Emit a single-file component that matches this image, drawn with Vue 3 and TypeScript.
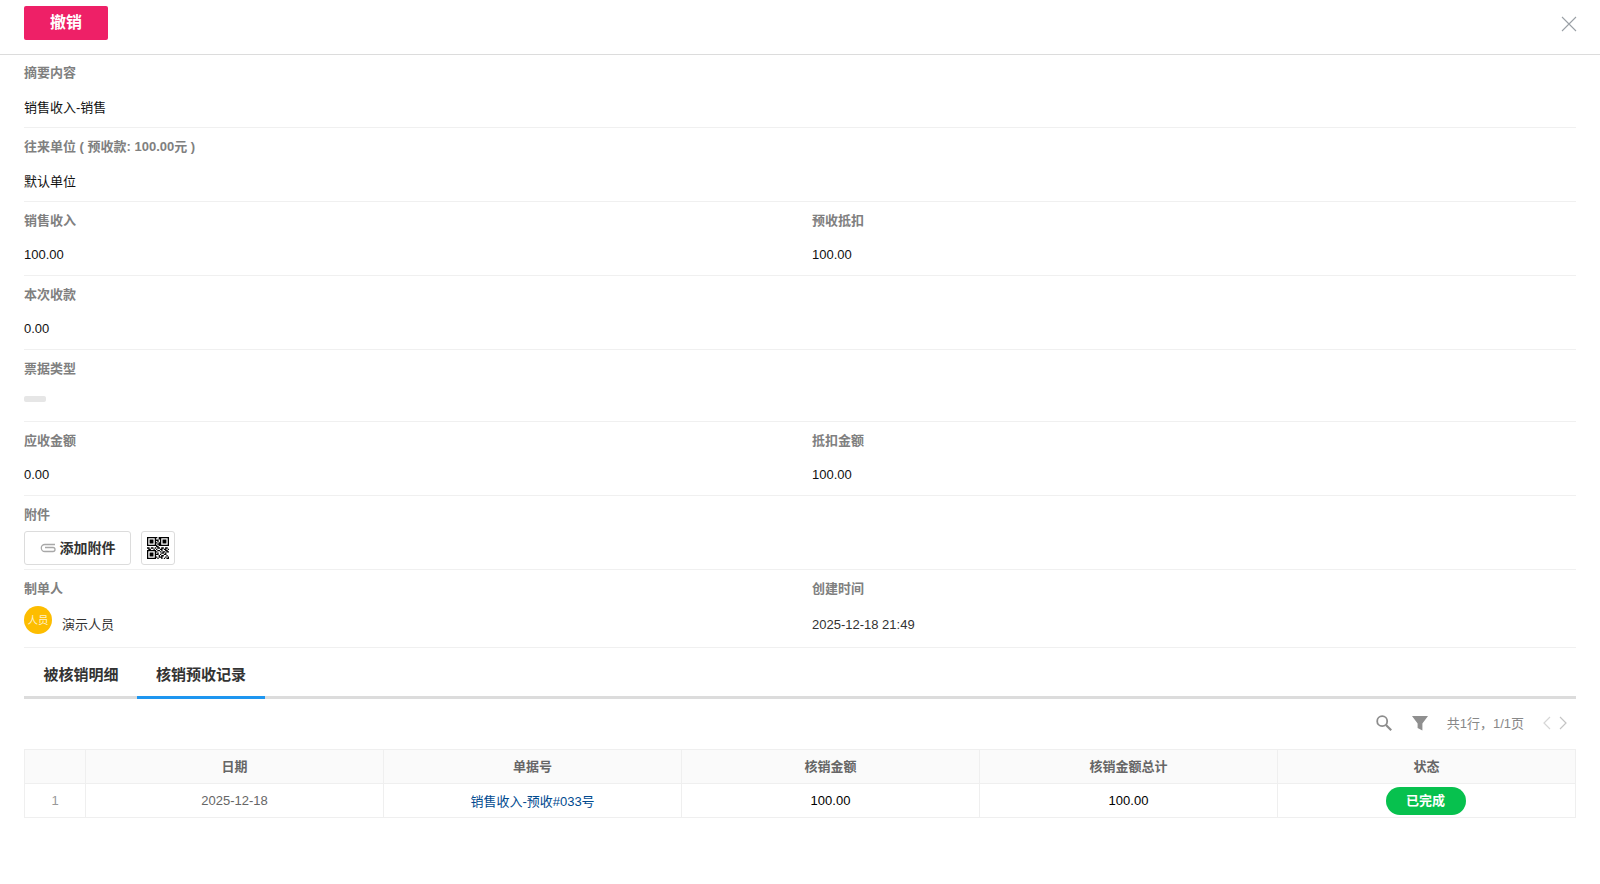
<script setup lang="ts">
interface Field { label: string; value: string }
const rowsTop: Field[][] = [
  [{ label: '摘要内容', value: '销售收入-销售' }],
  [{ label: '往来单位 ( 预收款: 100.00元 )', value: '默认单位' }],
  [{ label: '销售收入', value: '100.00' }, { label: '预收抵扣', value: '100.00' }],
  [{ label: '本次收款', value: '0.00' }],
]
const rowsMid: Field[][] = [
  [{ label: '应收金额', value: '0.00' }, { label: '抵扣金额', value: '100.00' }],
]
const heads = ['', '日期', '单据号', '核销金额', '核销金额总计', '状态']
const qrRows = [
  '11111111011111111',
  '10000010011000001',
  '10111011101011101',
  '10111010101011101',
  '10111011011011101',
  '10000010111000001',
  '11111111011111111',
  '00000001100000000',
  '11011010110110110',
  '01100101001101101',
  '11111110110100110',
  '10000011001011011',
  '10111010100110100',
  '10111011101001100',
  '10111010010110010',
  '10000011011100101',
  '11111110100101011',
]
const qrPath = qrRows
  .map((r, y) =>
    r
      .split('')
      .map((c, x) => (c === '1' ? `M${x} ${y}h1v1h-1z` : ''))
      .join(''),
  )
  .join('')
</script>

<template>
  <div class="page">
    <header class="topbar">
      <button class="revoke">撤销</button>
      <svg class="close" width="16" height="16" viewBox="0 0 16 16">
        <path d="M1 1l14 14M15 1L1 15" stroke="#9aa0a6" stroke-width="1.1" fill="none" />
      </svg>
    </header>
    <main class="body">
      <section v-for="(row, i) in rowsTop" :key="'t' + i" class="row" :class="{ first: i === 0, second: i === 1 }">
        <div v-for="f in row" :key="f.label" class="field">
          <div class="label">{{ f.label }}</div>
          <div class="value">{{ f.value }}</div>
        </div>
      </section>

      <section class="row row-ticket">
        <div class="field">
          <div class="label">票据类型</div>
          <div class="placeholder"></div>
        </div>
      </section>

      <section v-for="(row, i) in rowsMid" :key="'m' + i" class="row">
        <div v-for="f in row" :key="f.label" class="field">
          <div class="label">{{ f.label }}</div>
          <div class="value">{{ f.value }}</div>
        </div>
      </section>

      <section class="row row-attach">
        <div class="field">
          <div class="label">附件</div>
          <div class="attach">
            <button class="add">
              <svg width="16" height="10" viewBox="0 0 16 10" fill="none">
                <path d="M15 1.5H4.8a3.5 3.5 0 0 0 0 7h8.2a2 2 0 0 0 0-4H5" stroke="#a8a8a8" stroke-width="1.3" />
              </svg>
              <span>添加附件</span>
            </button>
            <button class="qr">
              <svg width="22" height="22" viewBox="0 0 17 17">
                <path :d="qrPath" fill="#000" />
              </svg>
            </button>
          </div>
        </div>
      </section>

      <section class="row row-maker">
        <div class="field">
          <div class="label">制单人</div>
          <div class="maker">
            <span class="avatar">人员</span>
            <span class="maker-name">演示人员</span>
          </div>
        </div>
        <div class="field">
          <div class="label">创建时间</div>
          <div class="value created">2025-12-18 21:49</div>
        </div>
      </section>

      <nav class="tabs">
        <span class="tab">被核销明细</span>
        <span class="tab active">核销预收记录</span>
      </nav>

      <div class="toolbar">
        <svg class="tool-icon" width="18" height="18" viewBox="0 0 18 18" fill="none">
          <circle cx="7.2" cy="7.2" r="5" stroke="#8c8c8c" stroke-width="1.8" />
          <path d="M11 11l5.2 5.2" stroke="#8c8c8c" stroke-width="2.2" />
        </svg>
        <svg class="tool-icon tool-filter" width="16" height="16" viewBox="0 0 16 16">
          <path d="M0 1h16L10.4 8.5V15.5L5.6 13V8.5z" fill="#8f8f8f" />
        </svg>
        <span class="pager-text">共1行，1/1页</span>
        <svg class="tool-icon chev" width="10" height="14" viewBox="0 0 10 14" fill="none">
          <path d="M8 1L2 7l6 6" stroke="#d6d6d6" stroke-width="1.2" />
        </svg>
        <svg class="tool-icon chev chev-next" width="10" height="14" viewBox="0 0 10 14" fill="none">
          <path d="M2 1l6 6-6 6" stroke="#c4c4c4" stroke-width="1.2" />
        </svg>
      </div>

      <div class="table">
        <div v-for="h in heads" :key="h" class="th">{{ h }}</div>
        <div class="td idx">1</div>
        <div class="td date">2025-12-18</div>
        <div class="td link">销售收入-预收#033号</div>
        <div class="td num">100.00</div>
        <div class="td num">100.00</div>
        <div class="td"><span class="status">已完成</span></div>
      </div>
    </main>
  </div>
</template>

<style>
html, body { margin: 0; background: #fff; }
</style>

<style scoped>
.page {
  width: 1600px;
  height: 884px;
  overflow: hidden;
  background: #fff;
  font-family: "Liberation Sans", "Noto Sans CJK SC", sans-serif;
  font-size: 13px;
  color: #000;
}
.topbar {
  height: 55px;
  box-sizing: border-box;
  border-bottom: 1px solid #dcdcdc;
  padding: 6px 24px 0;
  display: flex;
  justify-content: space-between;
  align-items: flex-start;
}
.revoke {
  width: 84px;
  height: 34px;
  border: 0;
  border-radius: 2px;
  background: #ee2067;
  color: #fff;
  font: bold 16px "Liberation Sans", "Noto Sans CJK SC", sans-serif;
  padding: 0 0 5px;
}
.close { margin: 10px -1px 0 0; }
.body { padding: 0 24px; }
.row {
  display: grid;
  grid-template-columns: 788px 1fr;
  height: 74px;
  box-sizing: border-box;
  border-bottom: 1px solid #f0f0f0;
}
.row.first { height: 73px; }
.label {
  padding-top: 9px;
  line-height: 20px;
  font-weight: bold;
  color: #808080;
}
.value {
  margin-top: 14px;
  line-height: 20px;
  color: #111;
}
.row.first .label { padding-top: 8px; }
.row.first .value { margin-top: 15px; }
.row.second .value { margin-top: 15px; }
.row-ticket { height: 72px; }
.placeholder {
  width: 22px;
  height: 6px;
  margin-top: 17px;
  border-radius: 2px;
  background: #e6e6e6;
}
.attach { display: flex; gap: 10px; margin-top: 6px; }
.add {
  width: 107px;
  height: 34px;
  box-sizing: border-box;
  border: 1px solid #dcdcdc;
  border-radius: 3px;
  background: #fff;
  display: flex;
  align-items: center;
  justify-content: center;
  gap: 4px;
  padding: 0 0 2px;
  color: #333;
  font: bold 14px "Liberation Sans", "Noto Sans CJK SC", sans-serif;
}
.add svg { margin-top: 2px; }
.qr {
  width: 34px;
  height: 34px;
  box-sizing: border-box;
  border: 1px solid #dcdcdc;
  border-radius: 3px;
  background: #fff;
  padding: 0;
  display: flex;
  align-items: center;
  justify-content: center;
}
.row-maker { height: 78px; }
.maker { display: flex; }
.avatar {
  width: 28px;
  height: 28px;
  border-radius: 50%;
  background: #fdbd00;
  color: #fff1c9;
  font-size: 10.5px;
  line-height: 28px;
  text-align: center;
  margin-top: 7px;
}
.maker-name { margin: 16px 0 0 10px; line-height: 20px; color: #333; }
.row .created { margin-top: 16px; color: #333; }
.tabs {
  height: 51px;
  box-sizing: border-box;
  border-bottom: 3px solid #dcdcdc;
  display: flex;
}
.tab {
  width: 114px;
  height: 51px;
  box-sizing: border-box;
  padding-top: 16px;
  line-height: 22px;
  text-align: center;
  font-size: 15px;
  font-weight: bold;
  color: #333;
}
.tab.active {
  width: 128px;
  margin-left: -1px;
  border-bottom: 3px solid #1e96f0;
}
.toolbar {
  height: 50px;
  box-sizing: border-box;
  padding-bottom: 4px;
  display: flex;
  align-items: center;
  justify-content: flex-end;
  color: #8a8a8a;
}
.tool-icon { margin-top: 2px; }
.tool-filter { margin-left: 19px; }
.pager-text { margin-left: 19px; color: #888; }
.chev { margin-left: 18px; }
.chev-next { margin: 2px 8px 0 6px; }
.table {
  display: grid;
  grid-template-columns: 61px repeat(4, 298px) 1fr;
  border-top: 1px solid #efefef;
  border-left: 1px solid #efefef;
}
.th, .td {
  height: 34px;
  box-sizing: border-box;
  border-right: 1px solid #efefef;
  border-bottom: 1px solid #efefef;
  display: flex;
  align-items: center;
  justify-content: center;
}
.th { background: #fafafa; font-weight: bold; color: #666; padding-bottom: 3px; }
.idx { color: #999; }
.date { color: #666; }
.link { color: #004a8f; padding-bottom: 1px; }
.num { color: #000; }
.status {
  width: 80px;
  height: 28px;
  margin-right: 2px;
  border-radius: 14px;
  background: #07c14e;
  color: #fff;
  font-weight: bold;
  line-height: 28px;
  text-align: center;
}
</style>
